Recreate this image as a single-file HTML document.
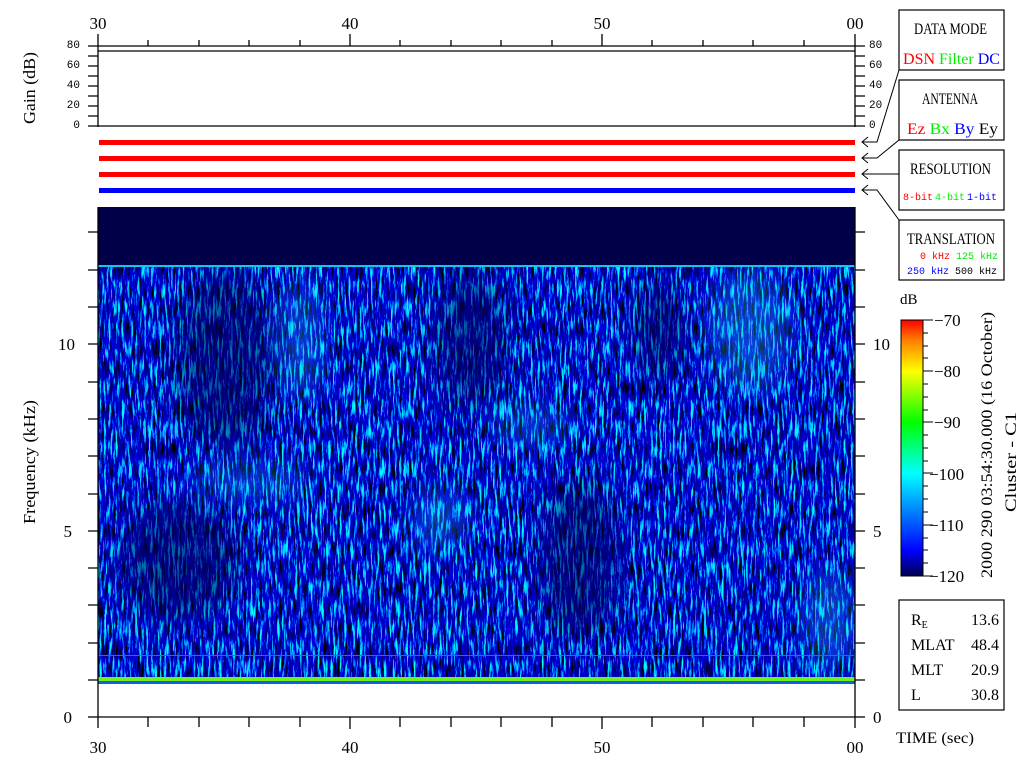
<!DOCTYPE html>
<html><head><meta charset="utf-8"><style>
html,body{margin:0;padding:0;background:#fff;width:1024px;height:768px;overflow:hidden}
svg{display:block}
text{font-family:"Liberation Serif",serif;fill:#000}
.m{font-family:"Liberation Mono",monospace}
</style></head><body>
<svg width="1024" height="768" viewBox="0 0 1024 768" xmlns="http://www.w3.org/2000/svg">
<defs>
<filter id="n" x="98" y="267" width="757" height="417" filterUnits="userSpaceOnUse" primitiveUnits="userSpaceOnUse">
<feTurbulence type="fractalNoise" baseFrequency="0.45 0.05" numOctaves="4" seed="7" result="t"/>
<feColorMatrix in="t" type="matrix" values="0 0 0 0 0  5 0 0 0 -2.8  3 0 0 0 -0.85  0 0 0 0 1"/>
</filter>
<filter id="b" x="-50%" y="-50%" width="200%" height="200%"><feGaussianBlur stdDeviation="14"/></filter>
<clipPath id="c"><rect x="98" y="267" width="757" height="410"/></clipPath>
<linearGradient id="cb" x1="0" y1="1" x2="0" y2="0">
<stop offset="0" stop-color="#000050"/><stop offset="0.1" stop-color="#0000ff"/><stop offset="0.4" stop-color="#00ffff"/><stop offset="0.6" stop-color="#00ff00"/><stop offset="0.8" stop-color="#ffff00"/><stop offset="0.92" stop-color="#ff8000"/><stop offset="1" stop-color="#ff0000"/>
</linearGradient>
</defs>
<rect x="98" y="207" width="757" height="477" fill="#000048"/>
<rect x="98" y="267" width="757" height="417" fill="#000" filter="url(#n)"/>
<g clip-path="url(#c)">
<g filter="url(#b)" fill="#000050" opacity="0.55">
<ellipse cx="225" cy="360" rx="50" ry="90"/>
<ellipse cx="470" cy="340" rx="35" ry="70"/>
<ellipse cx="580" cy="560" rx="40" ry="80"/>
<ellipse cx="180" cy="560" rx="60" ry="60"/>
<ellipse cx="660" cy="330" rx="25" ry="50"/>
</g>
<g filter="url(#b)" fill="#20b0e0" opacity="0.35">
<ellipse cx="300" cy="340" rx="20" ry="60"/>
<ellipse cx="250" cy="480" rx="60" ry="15"/>
<ellipse cx="530" cy="425" rx="40" ry="15"/>
<ellipse cx="750" cy="330" rx="40" ry="60"/>
<ellipse cx="440" cy="520" rx="25" ry="30"/>
<ellipse cx="830" cy="620" rx="25" ry="50"/>
</g>
</g>
<rect x="98" y="265" width="757" height="2" fill="#10c8e8"/>
<rect x="98" y="655" width="757" height="1" fill="#2a6ad0"/>
<rect x="98" y="677" width="757" height="4" fill="#70f020"/>
<rect x="98" y="681" width="757" height="3" fill="#1060e0"/>
<g stroke="#000" stroke-width="1.3" fill="none">
<line x1="98" y1="717" x2="855" y2="717"/>
<line x1="98" y1="207" x2="98" y2="728"/>
<line x1="855" y1="207" x2="855" y2="728"/>
<line x1="88" y1="717" x2="98" y2="717"/><line x1="855" y1="717" x2="865" y2="717"/>
<path d="M88 680h10M88 643h10M88 605h10M88 568h10M88 531h10M88 494h10M88 456h10M88 419h10M88 382h10M88 344h10M88 307h10M88 270h10M88 232h10"/>
<path d="M855 680h10M855 643h10M855 605h10M855 568h10M855 531h10M855 494h10M855 456h10M855 419h10M855 382h10M855 344h10M855 307h10M855 270h10M855 232h10"/>
<path d="M148 717v10M199 717v10M249 717v10M300 717v10M350 717v12M400 717v10M451 717v10M501 717v10M552 717v10M602 717v12M652 717v10M703 717v10M753 717v10M804 717v10"/>
<line x1="98" y1="34" x2="98" y2="127"/>
<line x1="855" y1="34" x2="855" y2="127"/>
<line x1="88" y1="46" x2="865" y2="46"/>
<line x1="98" y1="51" x2="855" y2="51"/>
<line x1="88" y1="126" x2="865" y2="126"/>
<path d="M148 46v-6M199 46v-6M249 46v-6M300 46v-6M350 46v-12M400 46v-6M451 46v-6M501 46v-6M552 46v-6M602 46v-12M652 46v-6M703 46v-6M753 46v-6M804 46v-6"/>
<path d="M88 56h10M88 66h10M88 76h10M88 86h10M88 96h10M88 106h10M88 116h10"/>
<path d="M855 56h10M855 66h10M855 76h10M855 86h10M855 96h10M855 106h10M855 116h10"/>
</g>
<rect x="99" y="140" width="756" height="5" fill="#ff0000"/>
<rect x="99" y="156" width="756" height="5" fill="#ff0000"/>
<rect x="99" y="172" width="756" height="5" fill="#ff0000"/>
<rect x="99" y="188" width="756" height="5" fill="#0000ff"/>
<g font-size="17" text-anchor="middle">
<text x="98" y="29">30</text><text x="350" y="29">40</text><text x="602" y="29">50</text><text x="855" y="29">00</text>
<text x="98" y="753">30</text><text x="350" y="753">40</text><text x="602" y="753">50</text><text x="855" y="753">00</text>
</g>
<g font-size="11" text-anchor="end">
<text x="80" y="48" class="m">80</text><text x="80" y="68" class="m">60</text><text x="80" y="88" class="m">40</text><text x="80" y="108" class="m">20</text><text x="80" y="128" class="m">0</text>
</g>
<g font-size="11">
<text x="869" y="48" class="m">80</text><text x="869" y="68" class="m">60</text><text x="869" y="88" class="m">40</text><text x="869" y="108" class="m">20</text><text x="869" y="128" class="m">0</text>
</g>
<g font-size="17">
<text x="72" y="723" text-anchor="end">0</text><text x="72" y="537" text-anchor="end">5</text><text x="75" y="350" text-anchor="end">10</text>
<text x="873" y="723">0</text><text x="873" y="537">5</text><text x="873" y="350">10</text>
</g>
<text font-size="17" transform="translate(35,124) rotate(-90)" textLength="72" lengthAdjust="spacingAndGlyphs">Gain (dB)</text>
<text font-size="17" transform="translate(35,524) rotate(-90)" textLength="124" lengthAdjust="spacingAndGlyphs">Frequency (kHz)</text>
<g stroke="#000" stroke-width="1.2" fill="#fff">
<rect x="899" y="10" width="105" height="60"/>
<rect x="899" y="80" width="105" height="60"/>
<rect x="899" y="150" width="105" height="60"/>
<rect x="899" y="220" width="105" height="60"/>
<rect x="899" y="600" width="105" height="110"/>
</g>
<g stroke="#000" stroke-width="1" fill="none">
<path d="M899 70L877 142H862M868 137L862 142L868 147"/>
<path d="M899 140L877 158H862M868 153L862 158L868 163"/>
<path d="M899 174H862M868 169L862 174L868 179"/>
<path d="M899 220L877 190H862M868 185L862 190L868 195"/>
</g>
<g font-size="16">
<text x="914" y="34" textLength="73" lengthAdjust="spacingAndGlyphs">DATA MODE</text>
<text x="903" y="64" textLength="97" lengthAdjust="spacingAndGlyphs"><tspan fill="#ff0000">DSN</tspan> <tspan fill="#00ee00">Filter</tspan> <tspan fill="#0000ff">DC</tspan></text>
<text x="922" y="104" textLength="56" lengthAdjust="spacingAndGlyphs">ANTENNA</text>
<text x="907" y="134" textLength="91" lengthAdjust="spacingAndGlyphs"><tspan fill="#ff0000">Ez</tspan>  <tspan fill="#00ee00">Bx</tspan>  <tspan fill="#0000ff">By</tspan>  Ey</text>
<text x="910" y="174" textLength="81" lengthAdjust="spacingAndGlyphs">RESOLUTION</text>
<text x="907" y="244" textLength="88" lengthAdjust="spacingAndGlyphs">TRANSLATION</text>
</g>
<g font-size="10">
<text x="903" y="200" class="m"><tspan fill="#ff0000">8-bit</tspan><tspan fill="#00ee00" dx="2">4-bit</tspan><tspan fill="#0000ff" dx="2">1-bit</tspan></text>
<text x="920" y="259" class="m"><tspan fill="#ff0000">0 kHz</tspan> <tspan fill="#00ee00">125 kHz</tspan></text>
<text x="907" y="274" class="m"><tspan fill="#0000ff">250 kHz</tspan> <tspan>500 kHz</tspan></text>
</g>
<text x="900" y="304" font-size="15">dB</text>
<rect x="901" y="320" width="22" height="256" fill="url(#cb)" stroke="#000" stroke-width="1"/>
<g stroke="#000" stroke-width="1">
<path d="M923 320h10M923 333h5M923 346h5M923 358h5M923 371h10M923 384h5M923 397h5M923 410h5M923 422h10M923 435h5M923 448h5M923 461h5M923 473h10M923 486h5M923 499h5M923 512h5M923 525h10M923 538h5M923 550h5M923 563h5M923 576h10"/>
</g>
<g font-size="17">
<text x="934" y="326">−70</text><text x="934" y="377">−80</text><text x="934" y="428">−90</text><text x="929" y="480">−100</text><text x="929" y="531">−110</text><text x="929" y="582">−120</text>
</g>
<text font-size="16" transform="translate(992,578) rotate(-90)" textLength="266" lengthAdjust="spacingAndGlyphs">2000 290 03:54:30.000 (16 October)</text>
<text font-size="16" transform="translate(1016,512) rotate(-90)" textLength="100" lengthAdjust="spacingAndGlyphs">Cluster - C1</text>
<g font-size="16">
<text x="911" y="625">R<tspan font-size="10" dy="3">E</tspan></text>
<text x="911" y="650">MLAT</text><text x="911" y="675">MLT</text><text x="911" y="700">L</text>
<text x="999" y="625" text-anchor="end">13.6</text><text x="999" y="650" text-anchor="end">48.4</text>
<text x="999" y="675" text-anchor="end">20.9</text><text x="999" y="700" text-anchor="end">30.8</text>
<text x="896" y="743" textLength="78" lengthAdjust="spacingAndGlyphs">TIME (sec)</text>
</g>
</svg>
</body></html>
